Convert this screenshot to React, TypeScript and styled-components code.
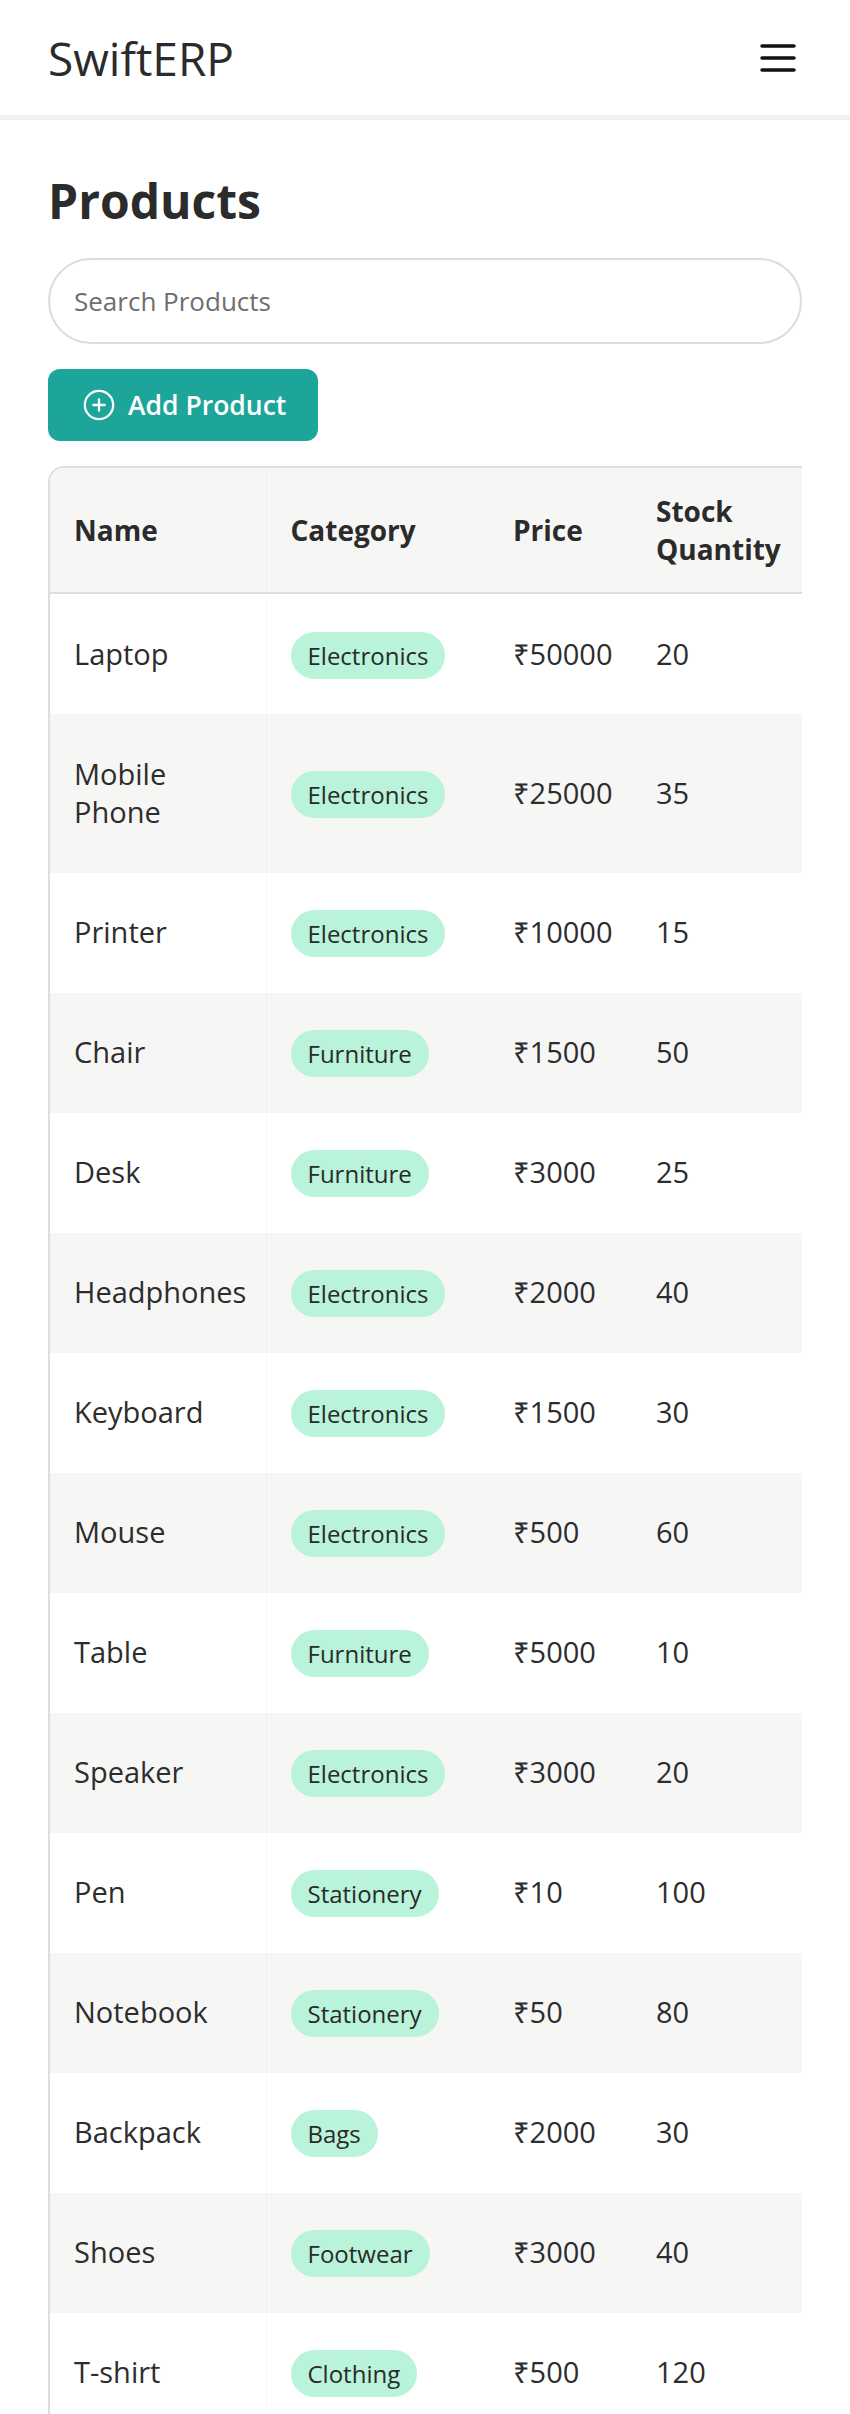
import React from "react";
import styled, { createGlobalStyle } from "styled-components";

const GlobalStyle = createGlobalStyle`
  html, body {
    margin: 0;
    padding: 0;
    background: #ffffff;
    font-family: "Open Sans", "Noto Sans", "DejaVu Sans", sans-serif;
    color: #2d2d2d;
  }
  * { box-sizing: border-box; }
`;

const TopBar = styled.header`
  height: 120px;
  padding: 0 48px;
  display: flex;
  align-items: center;
  justify-content: space-between;
  background: #ffffff;
  border-bottom: 5px solid #f1f1f1;
`;

const Brand = styled.div`
  font-size: 46px;
  font-weight: 500;
  line-height: 60px;
  color: #2b2b2b;
`;

const MenuButton = styled.button`
  width: 48px;
  height: 48px;
  padding: 0;
  border: none;
  background: transparent;
  display: flex;
  align-items: center;
  justify-content: center;
  color: #111111;
  cursor: pointer;
`;

const Main = styled.main`
  padding: 48px 48px 0;
  display: flex;
  flex-direction: column;
  gap: 25px;
`;

const Title = styled.h1`
  margin: 0;
  font-size: 48px;
  font-weight: 700;
  line-height: 65px;
  color: #2b2b2b;
`;

const SearchInput = styled.input`
  height: 86px;
  width: 100%;
  border: 2px solid #dcdcdc;
  border-radius: 43px;
  padding: 0 24px;
  font-family: inherit;
  font-size: 26px;
  color: #2d2d2d;
  outline: none;
  &::placeholder {
    color: #6e6e6e;
  }
`;

const AddButton = styled.button`
  align-self: flex-start;
  height: 72px;
  padding: 0 32px 0 34px;
  border: none;
  border-radius: 12px;
  background: #1ea59a;
  color: #ffffff;
  font-family: inherit;
  font-size: 26.5px;
  font-weight: 600;
  display: flex;
  align-items: center;
  gap: 12px;
  cursor: pointer;
`;

const TableScroll = styled.div`
  width: 100%;
  overflow-x: auto;
`;

const TableCard = styled.div<{ $w: number }>`
  width: ${(p) => p.$w}px;
  border: 2px solid #dedede;
  border-radius: 16px;
  overflow: hidden;
`;

const Table = styled.table`
  width: 100%;
  table-layout: fixed;
  border-collapse: collapse;
`;

const HeadCell = styled.th<{ $w: number; $first?: boolean }>`
  width: ${(p) => p.$w}px;
  padding: 24px 24px;
  font-size: 28px;
  font-weight: 700;
  line-height: 38px;
  text-align: left;
  vertical-align: middle;
  background: #f6f7f5;
  color: #2b2b2b;
  border-bottom: 2px solid #dedede;
  border-right: ${(p) => (p.$first ? "1px solid rgba(0,0,0,0.025)" : "none")};
`;

const Row = styled.tr<{ $alt: boolean }>`
  background: ${(p) => (p.$alt ? "#f6f7f5" : "#ffffff")};
`;

const Cell = styled.td<{ $first?: boolean }>`
  padding: 40.75px 24px;
  font-size: 29px;
  line-height: 38.5px;
  vertical-align: middle;
  color: #2d2d2d;
  border-right: ${(p) => (p.$first ? "1px solid rgba(0,0,0,0.025)" : "none")};
`;

const Badge = styled.span`
  display: inline;
  padding: 7px 17px;
  border-radius: 999px;
  background: #b9f3d9;
  color: #2a2a2a;
  font-size: 24px;
  line-height: 1.362;
`;

const ActionLink = styled.span`
  font-size: 22px;
  line-height: 1;
  color: #1ea59a;
  margin-right: 16px;
`;

type Product = { name: string; category: string; price: number; stock: number };

const products: Product[] = [
  { name: "Laptop", category: "Electronics", price: 50000, stock: 20 },
  { name: "Mobile Phone", category: "Electronics", price: 25000, stock: 35 },
  { name: "Printer", category: "Electronics", price: 10000, stock: 15 },
  { name: "Chair", category: "Furniture", price: 1500, stock: 50 },
  { name: "Desk", category: "Furniture", price: 3000, stock: 25 },
  { name: "Headphones", category: "Electronics", price: 2000, stock: 40 },
  { name: "Keyboard", category: "Electronics", price: 1500, stock: 30 },
  { name: "Mouse", category: "Electronics", price: 500, stock: 60 },
  { name: "Table", category: "Furniture", price: 5000, stock: 10 },
  { name: "Speaker", category: "Electronics", price: 3000, stock: 20 },
  { name: "Pen", category: "Stationery", price: 10, stock: 100 },
  { name: "Notebook", category: "Stationery", price: 50, stock: 80 },
  { name: "Backpack", category: "Bags", price: 2000, stock: 30 },
  { name: "Shoes", category: "Footwear", price: 3000, stock: 40 },
  { name: "T-shirt", category: "Clothing", price: 500, stock: 120 },
];

const columns = [
  { key: "name", label: "Name", w: 216 },
  { key: "category", label: "Category", w: 223 },
  { key: "price", label: "Price", w: 143 },
  { key: "stock", label: "Stock Quantity", w: 180 },
  { key: "actions", label: "Actions", w: 200 },
];

const tableWidth = columns.reduce((s, c) => s + c.w, 0) + 4;

const MenuIcon = () => (
  <svg width="48" height="48" viewBox="0 0 24 24" fill="none" stroke="currentColor" strokeWidth="1.75" strokeLinecap="round">
    <line x1="4" y1="6" x2="20" y2="6" />
    <line x1="4" y1="12" x2="20" y2="12" />
    <line x1="4" y1="18" x2="20" y2="18" />
  </svg>
);

const PlusCircleIcon = () => (
  <svg width="34" height="34" viewBox="0 0 24 24" fill="none" stroke="currentColor" strokeWidth="1.6" strokeLinecap="round">
    <circle cx="12" cy="12" r="10" />
    <line x1="12" y1="8" x2="12" y2="16" />
    <line x1="8" y1="12" x2="16" y2="12" />
  </svg>
);

export default function App() {
  return (
    <>
      <GlobalStyle />
      <TopBar>
        <Brand>SwiftERP</Brand>
        <MenuButton aria-label="Menu">
          <MenuIcon />
        </MenuButton>
      </TopBar>
      <Main>
        <Title>Products</Title>
        <SearchInput placeholder="Search Products" />
        <AddButton>
          <PlusCircleIcon />
          Add Product
        </AddButton>
        <TableScroll>
          <TableCard $w={tableWidth}>
            <Table>
              <thead>
                <tr>
                  {columns.map((c, i) => (
                    <HeadCell key={c.key} $w={c.w} $first={i === 0}>
                      {c.label}
                    </HeadCell>
                  ))}
                </tr>
              </thead>
              <tbody>
                {products.map((p, i) => (
                  <Row key={p.name} $alt={i % 2 === 1}>
                    <Cell $first>{p.name}</Cell>
                    <Cell>
                      <Badge>{p.category}</Badge>
                    </Cell>
                    <Cell>₹{p.price}</Cell>
                    <Cell>{p.stock}</Cell>
                    <Cell>
                      <ActionLink>Edit</ActionLink>
                      <ActionLink>Delete</ActionLink>
                    </Cell>
                  </Row>
                ))}
              </tbody>
            </Table>
          </TableCard>
        </TableScroll>
      </Main>
    </>
  );
}
